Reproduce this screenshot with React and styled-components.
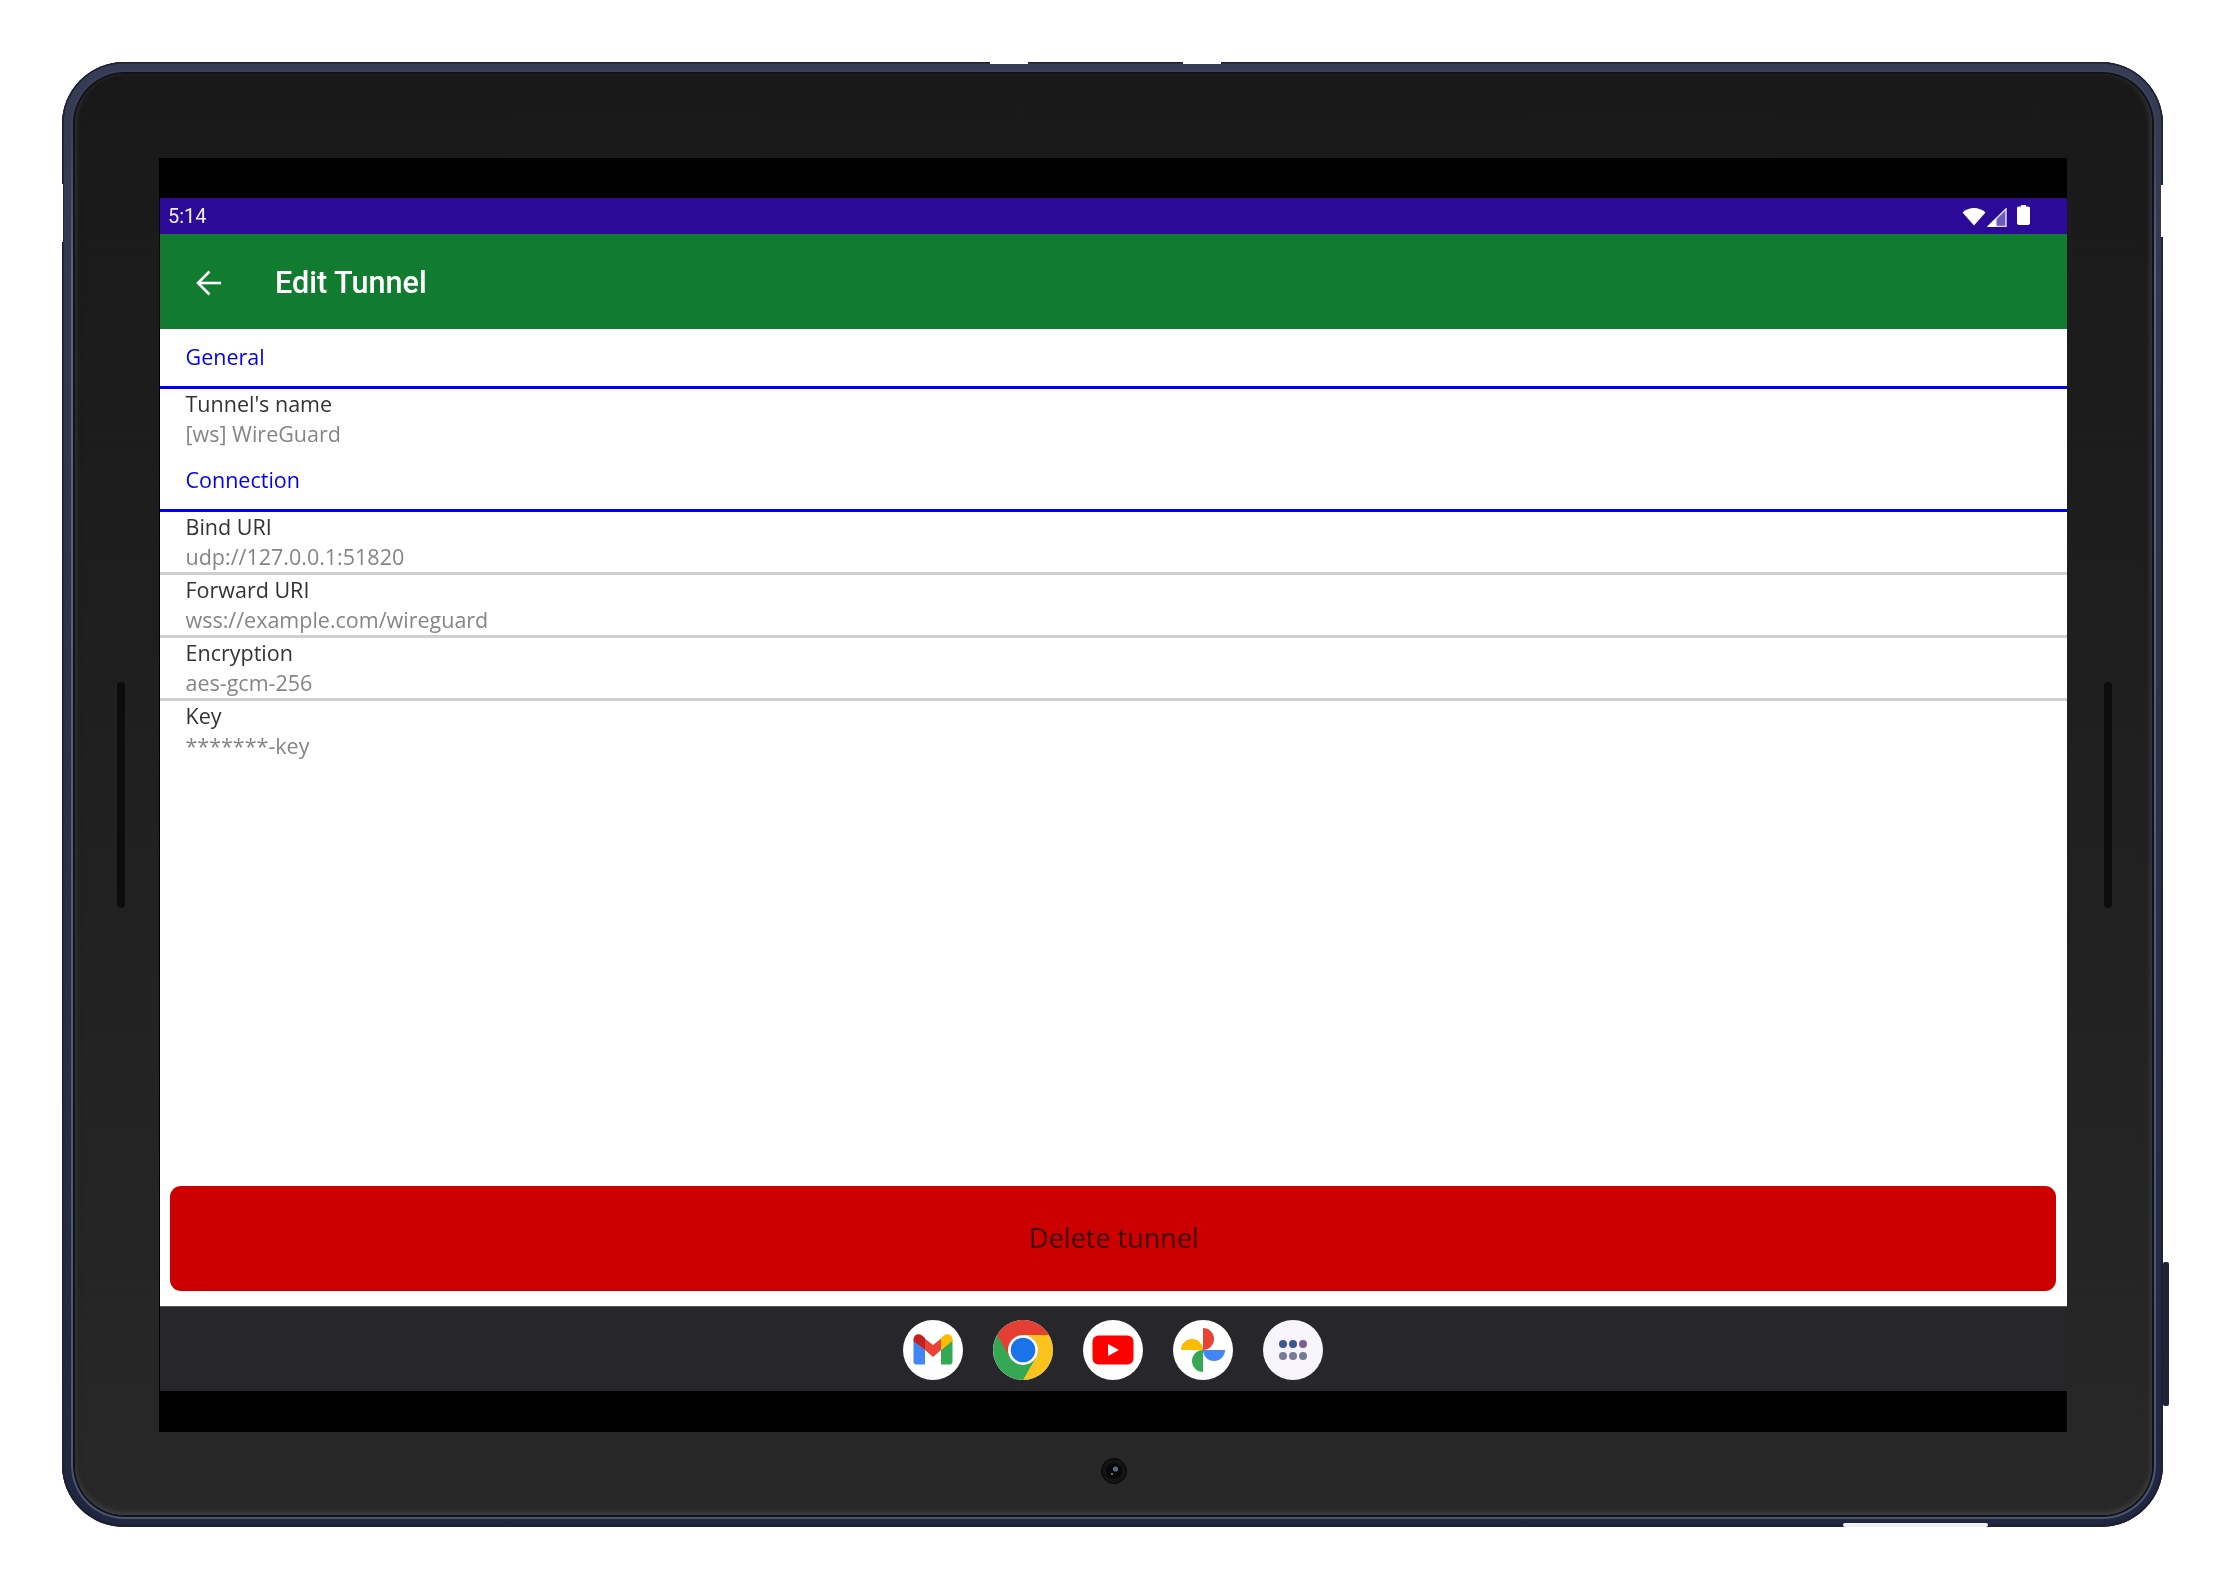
import React from 'react';
import styled, { createGlobalStyle } from 'styled-components';

const Global = createGlobalStyle`
  html, body { margin: 0; padding: 0; background: #fff; }
  body { width: 2226px; height: 1590px; overflow: hidden; font-family: "Open Sans", sans-serif; }
`;

const Page = styled.div`
  width: 2226px;
  height: 1590px;
  box-sizing: border-box;
  padding: 62px 63px 63px 62px;
  background: #fff;
`;

const Tablet = styled.div`
  position: relative;
  width: 2101px;
  height: 1465px;
  box-sizing: border-box;
  padding: 8px 7px 8px 9px;
  border-radius: 62px;
  background: linear-gradient(180deg, #363c54 0%, #2c3248 40%, #1f2740 100%);
  box-shadow: inset 0 0 0 1.5px #1e2230, inset 0 -1px 0 1.5px #1a2036;
`;

const Rim = styled.div`
  height: 100%;
  box-sizing: border-box;
  padding: 4px;
  border-radius: 54px;
  background: linear-gradient(180deg, #3a4058 0%, #3a4058 4%, #5c6480 14%, #4c5570 100%);
`;

const Face = styled.div`
  position: relative;
  height: 100%;
  box-sizing: border-box;
  padding: 84px 85px 83px 84px;
  border-radius: 50px;
  background: linear-gradient(180deg, #191919 0%, #1d1d1d 30%, #232323 70%, #282828 100%);
  box-shadow: 0 0 0 2px #0f121a, inset 0 -4px 6px -2px #444, inset -4px 0 6px -3px #3a3a3a, inset 4px 0 6px -4px #333;
`;

const Screen = styled.div`
  height: 100%;
  display: flex;
  flex-direction: column;
  background: #000;
  padding-left: 1px;
  filter: blur(0.35px);
`;

const TopInset = styled.div`
  height: 40px;
  flex: none;
`;

const StatusBar = styled.div`
  height: 36px;
  flex: none;
  display: flex;
  align-items: center;
  justify-content: space-between;
  padding: 0 37px 0 8px;
  background: #2a0a96;
  color: #f2eefa;
  font-family: Roboto, sans-serif;
  font-size: 20px;
  line-height: 36px;
`;

const StatusIcons = styled.div`
  display: flex;
  align-items: flex-start;
  height: 20px;
  margin-top: -3px;
`;

const AppBar = styled.div`
  height: 95px;
  flex: none;
  box-sizing: border-box;
  padding-top: 2px;
  display: flex;
  align-items: center;
  background: #117c2f;
  color: #fff;
  font-family: Roboto, sans-serif;
  font-weight: 500;
  font-size: 30.6px;
`;

const BackButton = styled.div`
  width: 115px;
  flex: none;
  display: flex;
  padding-left: 36px;
  box-sizing: border-box;
`;

const Content = styled.div`
  flex: 1;
  min-height: 0;
  display: flex;
  flex-direction: column;
  background: #fff;
`;

const SectionTitle = styled.div`
  height: 60px;
  flex: none;
  box-sizing: border-box;
  padding: 14px 0 0 25.5px;
  color: #0000f5;
  font-size: 21.5px;
  line-height: 28px;
  border-bottom: 3px solid #0000f0;
`;

const Row = styled.div`
  height: 63px;
  flex: none;
  box-sizing: border-box;
  padding: 0 0 0 25.5px;
  border-bottom: ${(p) => p.$line ? '3px solid #cfcfcf' : '0'};
  display: flex;
  flex-direction: column;
`;

const Label = styled.div`
  height: 29px;
  flex: none;
  line-height: 29px;
  font-size: 21.5px;
  color: #333;
`;

const Value = styled.div`
  height: 30px;
  flex: none;
  line-height: 31px;
  font-size: 21.5px;
  color: #858585;
`;

const Spacer = styled.div`
  flex: 1;
`;

const DeleteButton = styled.div`
  height: 105px;
  flex: none;
  box-sizing: border-box;
  padding: 0 0 2px 2px;
  margin: 0 11px 15px 10px;
  border-radius: 11px;
  background: #cc0000;
  color: #3a0606;
  display: flex;
  align-items: center;
  justify-content: center;
  font-size: 27px;
`;

const Dock = styled.div`
  height: 85px;
  flex: none;
  display: flex;
  align-items: center;
  justify-content: center;
  gap: 30px;
  background: #26262b;
  border-top: 1px solid #55555a;
  box-sizing: border-box;
  padding: 2px 2px 0 0;
`;

const DockIcon = styled.div`
  width: 60px;
  height: 60px;
  border-radius: 50%;
  background: ${(p) => p.$bg || '#fff'};
  overflow: hidden;
  display: flex;
  align-items: center;
  justify-content: center;
`;

const BottomInset = styled.div`
  height: 41px;
  flex: none;
`;

const Camera = styled.div`
  position: absolute;
  left: 1026px;
  bottom: 31px;
  width: 26px;
  height: 26px;
  display: flex;
`;

const Speaker = styled.div`
  position: absolute;
  top: 608px;
  ${(p) => p.$right ? 'right: 40px;' : 'left: 42px;'}
  width: 8px;
  height: 226px;
  border-radius: 4px;
  background: #0c0c0c;
`;

const EdgeNotch = styled.div`
  position: absolute;
  background: ${(p) => p.$color || '#fff'};
  left: ${(p) => p.$x}px;
  top: ${(p) => p.$y}px;
  width: ${(p) => p.$w}px;
  height: ${(p) => p.$h}px;
  border-radius: ${(p) => p.$r || 0}px;
`;

const Wifi = () => (
  <svg width="24" height="20" viewBox="0 0 24 20" style={{ marginTop: 1 }}>
    <path d="M0.5 6.5 C6.5 0.5 17.5 0.5 23.5 6.5 L12 19.5 Z" fill="#fff" />
  </svg>
);

const Signal = () => (
  <svg width="20" height="19" viewBox="0 0 20 19" style={{ marginLeft: 1, marginTop: 3 }}>
    <path d="M19 1 V18.5 H1 Z" fill="#6f5bbd" stroke="#e0dbf2" strokeWidth="1.5" />
    <path d="M0.5 18.8 L9.5 9.8 V18.8 Z" fill="#fff" />
  </svg>
);

const Battery = () => (
  <svg width="13" height="20" viewBox="0 0 13 20" style={{ marginLeft: 10 }}>
    <path d="M4 0 H9 V1.5 H11 C12.2 1.5 13 2.3 13 3.2 V18 C13 19.2 12.2 20 11 20 H2 C0.8 20 0 19.2 0 18 V3.2 C0 2.3 0.8 1.5 2 1.5 H4 Z" fill="#fff" />
  </svg>
);

const Arrow = () => (
  <svg width="26" height="26" viewBox="0 0 26 26" fill="none" stroke="#fff" strokeWidth="2.6">
    <path d="M25 13 H2.5" />
    <path d="M13.5 1.5 L2 13 L13.5 24.5" />
  </svg>
);

const Gmail = () => (
  <svg width="60" height="60" viewBox="0 0 60 60">
    <path d="M10.5 20 L22 30 V44.5 H13 C11.5 44.5 10.5 43.5 10.5 42 Z" fill="#4285f4" />
    <path d="M49.5 20 L38 30 V44.5 H47 C48.5 44.5 49.5 43.5 49.5 42 Z" fill="#34a853" />
    <path d="M18 15.5 L30 25 L42 15.5 L38 30 L30 37 L22 30 Z" fill="#ea4335" />
    <path d="M10.5 20 C10.5 14.5 15.5 13 19 15.5 L22 18 V30 L10.5 21 Z" fill="#c5221f" />
    <path d="M49.5 20 C49.5 14.5 44.5 13 41 15.5 L38 18 V30 L49.5 21 Z" fill="#fbbc04" />
  </svg>
);

const Chrome = () => (
  <svg width="60" height="60" viewBox="0 0 60 60">
    <circle cx="30" cy="30" r="30" fill="#34a853" />
    <path d="M30 0 A30 30 0 0 1 56 15 L30 15 A15 15 0 0 0 17 22.5 L4 15 A30 30 0 0 1 30 0 Z" fill="#e53f33" />
    <path d="M4 15 L17 37.5 L30 15 Z" fill="#e53f33" />
    <path d="M56 15 A30 30 0 0 1 30 60 L43 37.5 A15 15 0 0 0 30 15 Z" fill="#fcc31e" />
    <circle cx="30" cy="30" r="15" fill="#fff" />
    <circle cx="30" cy="30" r="12.3" fill="#1a73e8" />
  </svg>
);

const YouTube = () => (
  <svg width="60" height="60" viewBox="0 0 60 60">
    <rect x="9.5" y="15.5" width="41" height="29" rx="6" fill="#f00" />
    <path d="M25 24 L36 30 L25 36 Z" fill="#fff" />
  </svg>
);

const Photos = () => (
  <svg width="60" height="60" viewBox="0 0 60 60">
    <path d="M30 30 V8 A11 11 0 0 1 30 30 Z" fill="#ea4335" />
    <path d="M30 30 H52 A11 11 0 0 1 30 30 Z" fill="#4285f4" />
    <path d="M30 30 V52 A11 11 0 0 1 30 30 Z" fill="#34a853" />
    <path d="M30 30 H8 A11 11 0 0 1 30 30 Z" fill="#fbbc04" />
  </svg>
);

const AppsGrid = () => (
  <svg width="60" height="60" viewBox="0 0 60 60">
    <circle cx="20" cy="24" r="4" fill="#3f5591" />
    <circle cx="30" cy="24" r="4" fill="#3f5591" />
    <circle cx="40" cy="24" r="4" fill="#7d5f8c" />
    <circle cx="20" cy="36" r="4" fill="#767b95" />
    <circle cx="30" cy="36" r="4" fill="#767b95" />
    <circle cx="40" cy="36" r="4" fill="#767b95" />
  </svg>
);

const CameraLens = () => (
  <svg width="26" height="26" viewBox="0 0 26 26">
    <circle cx="13" cy="13" r="12.5" fill="#141414" stroke="#050505" />
    <circle cx="13" cy="13" r="8" fill="#08080a" />
    <circle cx="14.5" cy="11" r="2.6" fill="#5a6a80" />
    <circle cx="11" cy="16" r="1" fill="#8a8f98" />
  </svg>
);

const fields = [
  ['Bind URI', 'udp://127.0.0.1:51820', true],
  ['Forward URI', 'wss://example.com/wireguard', true],
  ['Encryption', 'aes-gcm-256', true],
  ['Key', '*******-key', false],
];

export default function App() {
  return (
    <Page>
      <Global />
      <Tablet>
        <Rim>
          <Face>
            <Screen>
              <TopInset />
              <StatusBar>
                <span>5:14</span>
                <StatusIcons>
                  <Wifi />
                  <Signal />
                  <Battery />
                </StatusIcons>
              </StatusBar>
              <AppBar>
                <BackButton><Arrow /></BackButton>
                Edit Tunnel
              </AppBar>
              <Content>
                <SectionTitle>General</SectionTitle>
                <Row>
                  <Label>Tunnel's name</Label>
                  <Value>[ws] WireGuard</Value>
                </Row>
                <SectionTitle>Connection</SectionTitle>
                {fields.map(([l, v, line]) => (
                  <Row key={l} $line={line}>
                    <Label>{l}</Label>
                    <Value>{v}</Value>
                  </Row>
                ))}
                <Spacer />
                <DeleteButton>Delete tunnel</DeleteButton>
              </Content>
              <Dock>
                <DockIcon><Gmail /></DockIcon>
                <DockIcon><Chrome /></DockIcon>
                <DockIcon><YouTube /></DockIcon>
                <DockIcon><Photos /></DockIcon>
                <DockIcon $bg="#f7f4fb"><AppsGrid /></DockIcon>
              </Dock>
              <BottomInset />
            </Screen>
            <Speaker />
            <Speaker $right />
            <Camera><CameraLens /></Camera>
          </Face>
        </Rim>
        <EdgeNotch $x={928} $y={0} $w={38} $h={2} />
        <EdgeNotch $x={1121} $y={0} $w={38} $h={2} />
        <EdgeNotch $x={0} $y={122} $w={1} $h={58} />
        <EdgeNotch $x={2099} $y={123} $w={2} $h={52} />
        <EdgeNotch $x={1781} $y={1461} $w={145} $h={4} $r={2} $color="#f1f1f1" />
        <EdgeNotch $x={2101} $y={1200} $w={6} $h={144} $r={2} $color="#1f2536" />
      </Tablet>
    </Page>
  );
}
